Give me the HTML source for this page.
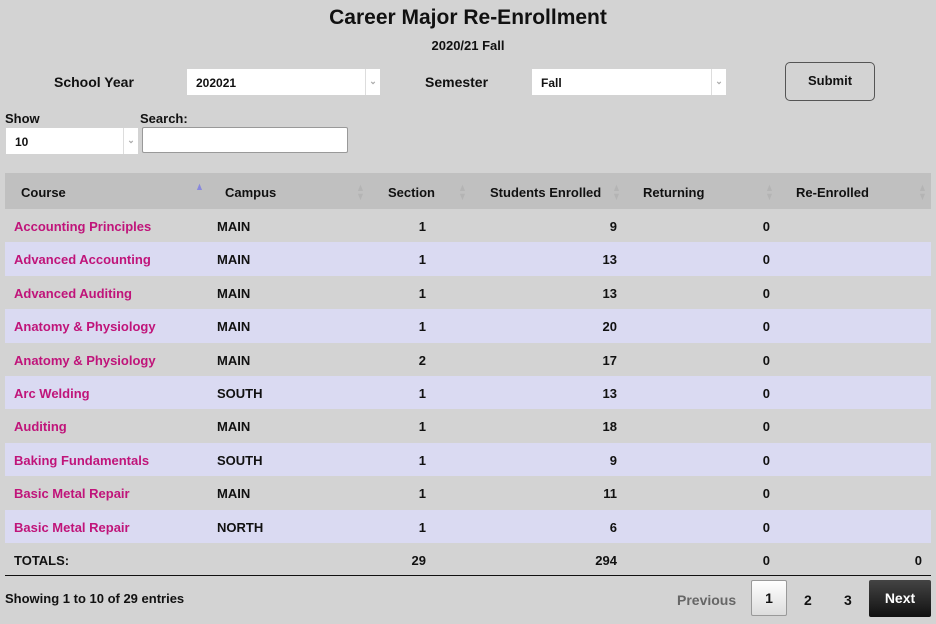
<!DOCTYPE html>
<html><head><style>
*{margin:0;padding:0;box-sizing:border-box}
body{width:936px;height:624px;background:#d3d3d3;font-family:"Liberation Sans",sans-serif;font-weight:bold;font-size:13px;color:#111;position:relative;overflow:hidden}
.a{position:absolute;white-space:nowrap}
.sel{position:absolute;background:#fff;height:26px}
.sel span{position:absolute;left:9px;top:7px;font-size:12px}
.sel i{position:absolute;right:0;top:0;width:15px;height:26px;border-left:1px solid #ddd;color:#aaa;font-style:normal;font-size:9px;text-align:center;line-height:24px}
.row{position:absolute;left:5px;width:926px;height:33.4px}
.row div{position:absolute;top:10px;white-space:nowrap}
.c1{left:9px;color:#c0147a}
.c2{left:212px}
.c3{right:505px}
.c4{right:314px}
.c5{right:161px}
.c6{right:9px}
.arr{position:absolute;top:184px;font-size:11px;color:#b4b4b4;line-height:9px;transform:scaleX(0.8)}
</style></head><body>
<div class="a" style="left:0;width:936px;text-align:center;top:6px;font-size:21px;font-weight:600">Career Major Re-Enrollment</div>
<div class="a" style="left:0;width:936px;text-align:center;top:38px;font-size:13px">2020/21 Fall</div>
<div class="a" style="left:54px;top:74px;font-size:14px">School Year</div>
<div class="sel" style="left:187px;top:69px;width:193px"><span>202021</span><i>&#8964;</i></div>
<div class="a" style="left:425px;top:74px;font-size:14px">Semester</div>
<div class="sel" style="left:532px;top:69px;width:194px"><span>Fall</span><i>&#8964;</i></div>
<div class="a" style="left:785px;top:62px;width:90px;height:39px;border:1px solid #555;border-radius:5px;text-align:center;line-height:36px">Submit</div>
<div class="a" style="left:5px;top:111px">Show</div>
<div class="sel" style="left:6px;top:128px;width:132px"><span>10</span><i>&#8964;</i></div>
<div class="a" style="left:140px;top:111px">Search:</div>
<div class="a" style="left:142px;top:127px;width:206px;height:26px;background:#fff;border:1px solid #999;border-radius:2px"></div>
<div class="a" style="left:5px;top:173px;width:926px;height:36px;background:#c0c0c0"></div>
<div class="a" style="left:21px;top:185px">Course</div>
<div class="a" style="left:225px;top:185px">Campus</div>
<div class="a" style="left:388px;top:185px">Section</div>
<div class="a" style="left:490px;top:185px">Students Enrolled</div>
<div class="a" style="left:643px;top:185px">Returning</div>
<div class="a" style="left:796px;top:185px">Re-Enrolled</div>
<div class="arr" style="left:194px;color:#8888dd;top:183px">▲</div>
<div class="arr" style="left:355px">▲<br>▼</div>
<div class="arr" style="left:457px">▲<br>▼</div>
<div class="arr" style="left:611px">▲<br>▼</div>
<div class="arr" style="left:764px">▲<br>▼</div>
<div class="arr" style="left:917px">▲<br>▼</div>

<div class="row" style="top:209px"><div class="c1">Accounting Principles</div><div class="c2">MAIN</div><div class="c3">1</div><div class="c4">9</div><div class="c5">0</div></div>
<div class="row" style="top:242.4px;background:#dadaf2"><div class="c1">Advanced Accounting</div><div class="c2">MAIN</div><div class="c3">1</div><div class="c4">13</div><div class="c5">0</div></div>
<div class="row" style="top:275.8px"><div class="c1">Advanced Auditing</div><div class="c2">MAIN</div><div class="c3">1</div><div class="c4">13</div><div class="c5">0</div></div>
<div class="row" style="top:309.2px;background:#dadaf2"><div class="c1">Anatomy &amp; Physiology</div><div class="c2">MAIN</div><div class="c3">1</div><div class="c4">20</div><div class="c5">0</div></div>
<div class="row" style="top:342.6px"><div class="c1">Anatomy &amp; Physiology</div><div class="c2">MAIN</div><div class="c3">2</div><div class="c4">17</div><div class="c5">0</div></div>
<div class="row" style="top:376px;background:#dadaf2"><div class="c1">Arc Welding</div><div class="c2">SOUTH</div><div class="c3">1</div><div class="c4">13</div><div class="c5">0</div></div>
<div class="row" style="top:409.4px"><div class="c1">Auditing</div><div class="c2">MAIN</div><div class="c3">1</div><div class="c4">18</div><div class="c5">0</div></div>
<div class="row" style="top:442.8px;background:#dadaf2"><div class="c1">Baking Fundamentals</div><div class="c2">SOUTH</div><div class="c3">1</div><div class="c4">9</div><div class="c5">0</div></div>
<div class="row" style="top:476.2px"><div class="c1">Basic Metal Repair</div><div class="c2">MAIN</div><div class="c3">1</div><div class="c4">11</div><div class="c5">0</div></div>
<div class="row" style="top:509.6px;background:#dadaf2"><div class="c1">Basic Metal Repair</div><div class="c2">NORTH</div><div class="c3">1</div><div class="c4">6</div><div class="c5">0</div></div>
<div class="row" style="top:543px;border-bottom:1px solid #111"><div style="left:9px">TOTALS:</div><div class="c3">29</div><div class="c4">294</div><div class="c5">0</div><div class="c6">0</div></div>

<div class="a" style="left:5px;top:591px">Showing 1 to 10 of 29 entries</div>
<div class="a" style="left:677px;top:592px;color:#666;font-size:14px">Previous</div>
<div class="a" style="left:751px;top:580px;width:36px;height:36px;border:1px solid #999;border-radius:2px;background:linear-gradient(#fff,#ddd);text-align:center;line-height:34px;font-size:14px">1</div>
<div class="a" style="left:804px;top:592px;font-size:14px">2</div>
<div class="a" style="left:844px;top:592px;font-size:14px">3</div>
<div class="a" style="left:869px;top:580px;width:62px;height:37px;background:linear-gradient(#444,#111);color:#fff;text-align:center;line-height:37px;font-size:14px;border-radius:2px">Next</div>
</body></html>
